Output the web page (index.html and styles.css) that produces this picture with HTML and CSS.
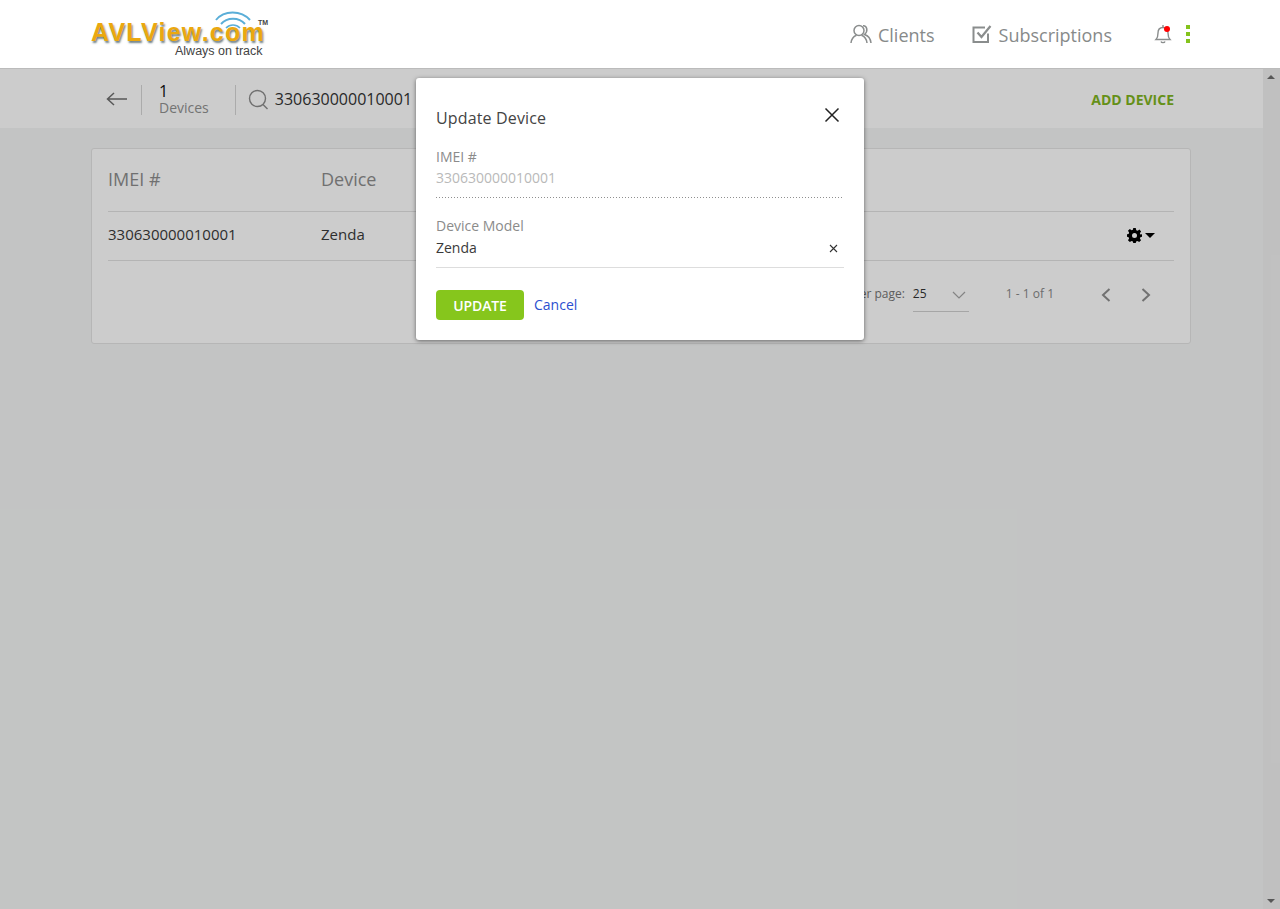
FILE: index.html
```html
<!DOCTYPE html>
<html lang="en">
<head>
    <meta charset="UTF-8">
    <title>Devices</title>
    <link rel="stylesheet" href="styles.css">
</head>
<body>
    <header class="topbar">
        <div class="logo">
            <svg class="logo-wifi" width="38" height="26" viewBox="0 0 38 26" fill="none" stroke="#5aaed8">
                <path d="M2 11 C10 1 27 1 36 11" stroke-width="2"/>
                <path d="M7 15 C13 8 25 8 31 15" stroke-width="2"/>
                <path d="M12 19 C16 15 22 15 26 19" stroke-width="1.6"/>
            </svg>
            <span class="logo-tm">TM</span>
            <span class="logo-name">AVLView.com</span>
            <span class="logo-tag">Always on track</span>
        </div>
        <nav class="topnav">
            <a class="navlink">
                <svg width="22" height="20" viewBox="0 0 22 20" fill="none" stroke="#8a8d8d" stroke-width="1.5">
                    <circle cx="9" cy="6.5" r="5"/>
                    <path d="M1 19 C1.5 14 4.5 12 6.5 11.2 M11.5 11.2 C13.5 12 16.5 14 17 19"/>
                    <path d="M13 1.8 C17 1.5 18.5 7 14.5 10.5 C17.5 11.5 20.5 14 21 19"/>
                </svg>
                Clients
            </a>
            <a class="navlink navlink-subs">
                <svg width="20" height="20" viewBox="0 0 20 20" fill="none" stroke="#8a8d8d">
                    <path d="M16 9.5 V18 H1.5 V3.5 H13" stroke-width="2"/>
                    <path d="M5.5 8.5 L9.5 13 L18.5 2" stroke-width="2.2"/>
                </svg>
                Subscriptions
            </a>
            <span class="bell">
                <svg width="18" height="20" viewBox="0 0 18 20" fill="none" stroke="#8a8d8d" stroke-width="1.4">
                    <path d="M2 15.5 C4 13.5 4 11.5 4 9 C4 5.5 6 3.5 9 3.5 C12 3.5 14 5.5 14 9 C14 11.5 14 13.5 16 15.5 Z"/>
                    <path d="M9 1 V3.5 M7 17.5 C7.5 19 10.5 19 11 17.5"/>
                </svg>
                <i class="bell-dot"></i>
            </span>
            <span class="kebab"><i></i><i></i><i></i></span>
        </nav>
    </header>

    <div class="page">
        <main class="content">
            <div class="subbar">
                <div class="subbar-left">
                    <svg class="back" width="22" height="14" viewBox="0 0 22 14" fill="none" stroke="#6f6f6f" stroke-width="1.5">
                        <path d="M21 7 H1.5 M8 1 L1.5 7 L8 13"/>
                    </svg>
                    <div class="count">
                        <b>1</b>
                        <span>Devices</span>
                    </div>
                    <div class="search">
                        <svg width="21" height="21" viewBox="0 0 21 21" fill="none" stroke="#8c8c8c" stroke-width="1.4">
                            <circle cx="9.5" cy="9.5" r="8"/>
                            <path d="M15 15.5 L19.5 20"/>
                        </svg>
                        <span>330630000010001</span>
                    </div>
                </div>
                <a class="add-device">ADD DEVICE</a>
            </div>

            <section class="card">
                <div class="row row-head">
                    <div class="col-imei">IMEI #</div>
                    <div class="col-device">Device</div>
                </div>
                <div class="row row-data">
                    <div class="col-imei">330630000010001</div>
                    <div class="col-device">Zenda</div>
                    <div class="row-action">
                        <svg width="15" height="15" viewBox="0 0 24 24" fill="#000">
                            <path fill-rule="evenodd" d="M10 0 H14 L14.8 3.4 L17 4.3 L20 2.5 L22.5 5.5 L20.6 8.4 L21.4 10.4 L24 10 V14 L21.4 14.6 L20.6 16.7 L22.5 19.5 L19.5 22.5 L16.7 20.6 L14.6 21.4 L14 24 H10 L9.4 21.4 L7.3 20.6 L4.5 22.5 L1.5 19.5 L3.4 16.7 L2.6 14.6 L0 14 V10 L2.6 9.4 L3.4 7.3 L1.5 4.5 L4.5 1.5 L7.3 3.4 L9.4 2.6 Z M12 8 A4 4 0 1 0 12 16 A4 4 0 1 0 12 8 Z"/>
                        </svg>
                        <i class="caret"></i>
                    </div>
                </div>
                <div class="pager">
                    <span class="pager-label">Items per page:</span>
                    <div class="pager-select">
                        <span>25</span>
                        <svg width="14" height="8" viewBox="0 0 14 8" fill="none" stroke="#a5a5a5" stroke-width="1.2">
                            <path d="M1 1 L7 7 L13 1"/>
                        </svg>
                    </div>
                    <span class="pager-range">1 - 1 of 1</span>
                    <svg class="pager-prev" width="10" height="14" viewBox="0 0 10 14" fill="none" stroke="#8e8e8e" stroke-width="2">
                        <path d="M8.5 1 L2 7 L8.5 13"/>
                    </svg>
                    <svg class="pager-next" width="10" height="14" viewBox="0 0 10 14" fill="none" stroke="#8e8e8e" stroke-width="2">
                        <path d="M1.5 1 L8 7 L1.5 13"/>
                    </svg>
                </div>
            </section>
        </main>
        <div class="scrollbar">
            <i class="arrow-up"></i>
            <i class="arrow-down"></i>
        </div>
    </div>

    <div class="overlay"></div>

    <div class="modal">
        <div class="modal-head">
            <h3>Update Device</h3>
            <svg width="16" height="16" viewBox="0 0 16 16" fill="none" stroke="#222" stroke-width="1.5">
                <path d="M1.5 1.5 L14.5 14.5 M14.5 1.5 L1.5 14.5"/>
            </svg>
        </div>
        <div class="field field-disabled">
            <label>IMEI #</label>
            <div class="field-value">330630000010001</div>
        </div>
        <div class="field field-model">
            <label>Device Model</label>
            <div class="field-value">
                Zenda
                <svg width="9" height="9" viewBox="0 0 9 9" fill="none" stroke="#333" stroke-width="1.1">
                    <path d="M1 1 L8 8 M8 1 L1 8"/>
                </svg>
            </div>
        </div>
        <div class="modal-actions">
            <button type="button">UPDATE</button>
            <a>Cancel</a>
        </div>
    </div>
</body>
</html>
```

FILE: styles.css
```css
html, body {
    height: 100%;
    margin: 0;
}
body {
    font-family: "Open Sans", Arial, sans-serif;
    display: flex;
    flex-direction: column;
    overflow: hidden;
    background-color: #f4f6f5;
    color: #333;
}
.topbar {
    height: 68px;
    flex: none;
    background-color: #fff;
    border-bottom: 1px solid #bbb;
    display: flex;
    justify-content: space-between;
    padding: 0 90px 0 91px;
}
.logo {
    position: relative;
    width: 180px;
}
.logo-name {
    position: absolute;
    left: 0;
    top: 15px;
    font-family: "Liberation Sans", Arial, sans-serif;
    font-weight: bold;
    font-size: 25px;
    line-height: 34px;
    letter-spacing: 1.25px;
    color: #eba80f;
    text-shadow: 1px 2px 2px rgba(50, 75, 85, 0.7);
    white-space: nowrap;
}
.logo-wifi {
    position: absolute;
    left: 123px;
    top: 9px;
}
.logo-tm {
    position: absolute;
    left: 167px;
    top: 18px;
    font-family: "Liberation Sans", Arial, sans-serif;
    font-weight: bold;
    font-size: 7px;
    line-height: 9px;
    color: #444;
}
.logo-tag {
    position: absolute;
    left: 84px;
    top: 44px;
    font-family: "Liberation Sans", Arial, sans-serif;
    font-size: 12.5px;
    line-height: 14px;
    color: #444;
    white-space: nowrap;
}
.topnav {
    display: flex;
    align-items: center;
}
.navlink {
    display: flex;
    align-items: center;
    gap: 6px;
    font-size: 18px;
    line-height: 24px;
    padding-top: 2px;
    color: #878a8a;
}
.navlink svg {
    margin-top: -3px;
}
.navlink-subs {
    margin-left: 37px;
    gap: 7px;
}
.bell {
    position: relative;
    display: flex;
    margin-left: 42px;
}
.bell-dot {
    position: absolute;
    left: 10px;
    top: 2px;
    width: 6px;
    height: 6px;
    border-radius: 50%;
    background-color: #f00;
}
.kebab {
    display: flex;
    flex-direction: column;
    gap: 3px;
    margin: 0 0 0 14px;
    width: 4px;
}
.kebab i {
    width: 4px;
    height: 4px;
    background-color: #84c31c;
}
.page {
    flex: 1;
    display: flex;
    min-height: 0;
}
.content {
    flex: 1;
}
.subbar {
    height: 57px;
    padding: 2px 89px 0 106px;
    background-color: #fff;
    display: flex;
    align-items: center;
    justify-content: space-between;
}
.subbar-left {
    display: flex;
    align-items: center;
}
.back {
    margin: -2px 13px 0 0;
}
.count {
    height: 30px;
    border-left: 1px solid #d6d6d6;
    padding: 0 26px 0 17px;
    display: flex;
    flex-direction: column;
    font-size: 13px;
    line-height: 16px;
    color: #919191;
}
.count b {
    font-weight: normal;
    font-size: 16px;
    line-height: 17px;
    margin-top: -2px;
    color: #111;
}
.count span {
    font-size: 14px;
}
.search {
    height: 30px;
    border-left: 1px solid #d6d6d6;
    padding-left: 12px;
    display: flex;
    align-items: center;
    gap: 6px;
    font-size: 16px;
    color: #333;
    white-space: nowrap;
}
.search svg {
    margin-top: -1px;
}
.search span {
    margin-top: -1px;
}
.add-device {
    font-size: 14px;
    font-weight: bold;
    color: #7fb51f;
}
.card {
    margin: 20px 72px 0 91px;
    height: 194px;
    background-color: #fff;
    border: 1px solid #e4e4e4;
    border-radius: 3px;
    padding: 0 16px;
}
.row {
    display: flex;
    align-items: center;
    border-bottom: 1px solid #e2e2e2;
}
.row-head {
    height: 59px;
    padding-bottom: 3px;
    font-size: 18px;
    color: #8d8d8d;
}
.row-data {
    height: 44px;
    padding-bottom: 4px;
    font-size: 15px;
    color: #3a3a3a;
}
.col-imei {
    width: 213px;
}
.row-action {
    margin: 3px 19px 0 auto;
    display: flex;
    align-items: center;
    gap: 3px;
}
.caret {
    border: 5px solid transparent;
    border-top: 5px solid #000;
    border-bottom: 0;
}
.pager {
    display: flex;
    align-items: flex-start;
    justify-content: flex-end;
    font-size: 12px;
    color: #757575;
    padding-top: 17px;
}
.pager-label {
    line-height: 32px;
}
.pager-select {
    width: 56px;
    height: 34px;
    padding: 0 3px 2px 0;
    margin-left: 8px;
    border-bottom: 1px solid #d0d0d0;
    display: flex;
    align-items: center;
    justify-content: space-between;
    box-sizing: border-box;
    color: #333;
}
.pager-select svg {
    margin-top: 2px;
}
.pager-range {
    margin-left: 37px;
    line-height: 32px;
    color: #888;
}
.pager-prev {
    margin: 10px 0 0 47px;
}
.pager-next {
    margin: 10px 23px 0 30px;
}
.scrollbar {
    position: relative;
    width: 17px;
    flex: none;
    background-color: #f1f1f1;
}
.arrow-up, .arrow-down {
    position: absolute;
    left: 4px;
    border: 4px solid transparent;
}
.arrow-up {
    top: 6px;
    border-top: 0;
    border-bottom: 4px solid #6d6d6d;
}
.arrow-down {
    bottom: 6px;
    border-bottom: 0;
    border-top: 4px solid #6d6d6d;
}
.overlay {
    position: absolute;
    left: 0;
    right: 0;
    top: 69px;
    bottom: 0;
    background-color: rgba(0, 0, 0, 0.2);
}
.modal {
    position: absolute;
    left: 416px;
    top: 78px;
    width: 448px;
    height: 262px;
    box-sizing: border-box;
    background-color: #fff;
    border-radius: 3px;
    box-shadow: 0 1px 4px rgba(0, 0, 0, 0.5);
    padding: 0 20px;
    font-size: 14px;
}
.modal-head {
    display: flex;
    justify-content: space-between;
    align-items: flex-start;
    height: 69px;
    padding-right: 4px;
}
.modal-head h3 {
    margin: 29px 0 0;
    font-size: 16px;
    line-height: 22px;
    font-weight: normal;
    letter-spacing: 0.15px;
    color: #444;
}
.modal-head svg {
    margin-top: 29px;
}
.field label {
    display: block;
    line-height: 20px;
    color: #8b8b8b;
}
.field-value {
    display: flex;
    justify-content: space-between;
    align-items: center;
    line-height: 22px;
}
.field-disabled {
    margin-right: 2px;
    height: 51px;
    background: repeating-linear-gradient(90deg, #8f8f8f 0 1px, transparent 1px 3px) left bottom / 100% 1px no-repeat;
}
.field-disabled .field-value {
    color: #b9b9b9;
}
.field-model {
    margin-top: 18px;
    height: 51px;
    border-bottom: 1px solid #ddd;
}
.field-model label {
    margin-bottom: 1px;
}
.field-model .field-value {
    color: #3a3a3a;
    padding-right: 6px;
}
.modal-actions {
    display: flex;
    align-items: center;
    gap: 10px;
    margin-top: 22px;
}
.modal-actions button {
    width: 88px;
    height: 30px;
    padding: 0;
    border: none;
    border-radius: 4px;
    background-color: #86c61c;
    color: #fff;
    font-family: inherit;
    font-size: 14px;
    font-weight: 600;
    letter-spacing: -0.1px;
}
.modal-actions a {
    margin-bottom: 2px;
    color: #2b4fd0;
}
```
